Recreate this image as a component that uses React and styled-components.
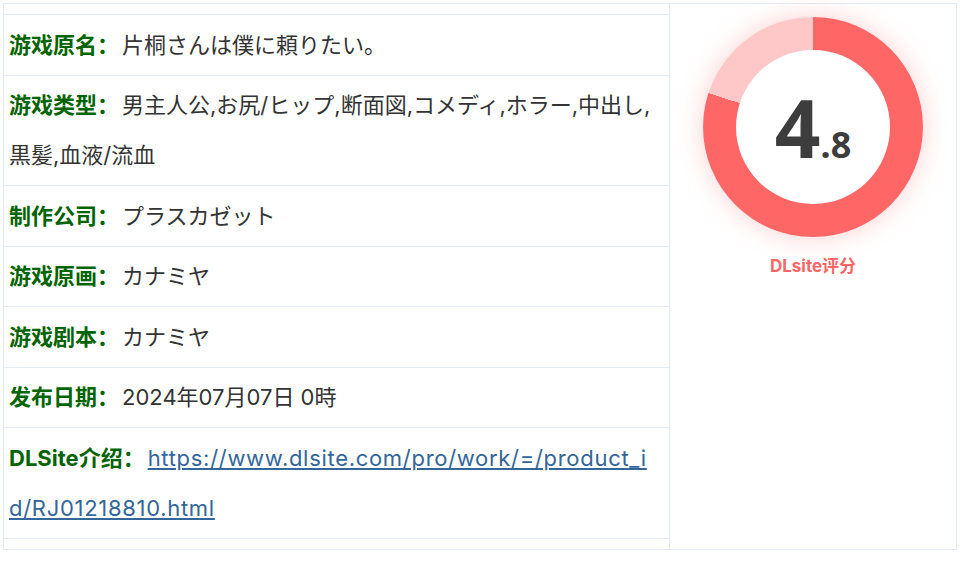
import React from 'react';
import styled, { createGlobalStyle } from 'styled-components';

const borderColor = '#e3ecf4';
const labelColor = '#006400';
const ringColor = '#ff6666';

const GlobalStyle = createGlobalStyle`
  body {
    margin: 0;
    background: #fff;
    font-family: Inter, "Noto Sans CJK SC", sans-serif;
  }
`;

const Panel = styled.div`
  display: grid;
  grid-template-columns: 1fr 286px;
  width: 952px;
  margin: 3px;
  border: 1px solid ${borderColor};
`;

const InfoCell = styled.div`
  border-right: 1px solid ${borderColor};
  padding: 10px 0;
`;

const InfoRow = styled.div`
  padding: 4.5px 10px 5px 5px;
  border-top: 1px solid ${borderColor};
  font-size: 22px;
  line-height: 50px;
  color: #333;
  word-break: break-all;
  &:last-child {
    border-bottom: 1px solid ${borderColor};
  }
`;

const Label = styled.span`
  color: ${labelColor};
  font-weight: bold;
  padding-right: 3px;
`;

const Link = styled.a`
  color: #336699;
  text-decoration: underline;
  letter-spacing: 0.7px;
`;

const ScoreCell = styled.div`
  display: flex;
  flex-direction: column;
  align-items: center;
  padding-top: 13px;
`;

const Ring = styled.div`
  width: 220px;
  height: 220px;
  border-radius: 50%;
  background: conic-gradient(${ringColor} 0 ${(p) => p.$pct}%, #ffc8c8 ${(p) => p.$pct}% 100%);
  box-shadow: 0 0 26px rgba(255, 102, 102, 0.3);
  display: flex;
  align-items: center;
  justify-content: center;
`;

const RingHole = styled.div`
  width: 154px;
  height: 154px;
  border-radius: 50%;
  background: #fff;
  display: flex;
  align-items: baseline;
  justify-content: center;
  color: #3d3d3d;
  font-family: "Noto Sans", "DejaVu Sans", sans-serif;
  font-weight: bold;
  line-height: 154px;
`;

const ScoreInt = styled.span`
  font-size: 80px;
`;

const ScoreDec = styled.span`
  font-size: 36px;
`;

const ScoreTitle = styled.div`
  margin-top: 18px;
  color: ${ringColor};
  font-size: 17px;
  font-weight: bold;
  line-height: 22px;
`;

const rows = [
  ['游戏原名', '片桐さんは僕に頼りたい。'],
  ['游戏类型', '男主人公,お尻/ヒップ,断面図,コメディ,ホラー,中出し,黒髪,血液/流血'],
  ['制作公司', 'プラスカゼット'],
  ['游戏原画', 'カナミヤ'],
  ['游戏剧本', 'カナミヤ'],
  ['发布日期', '2024年07月07日 0時'],
];

const url = 'https://www.dlsite.com/pro/work/=/product_id/RJ01218810.html';

export default function App() {
  return (
    <>
      <GlobalStyle />
      <Panel>
        <InfoCell>
          {rows.map(([k, v]) => (
            <InfoRow key={k}>
              <Label>{k}：</Label>
              {v}
            </InfoRow>
          ))}
          <InfoRow>
            <Label>DLSite介绍：</Label>
            <Link href={url}>{url}</Link>
          </InfoRow>
        </InfoCell>
        <ScoreCell>
          <Ring $pct={80}>
            <RingHole>
              <ScoreInt>4</ScoreInt>
              <ScoreDec>.8</ScoreDec>
            </RingHole>
          </Ring>
          <ScoreTitle>DLsite评分</ScoreTitle>
        </ScoreCell>
      </Panel>
    </>
  );
}
